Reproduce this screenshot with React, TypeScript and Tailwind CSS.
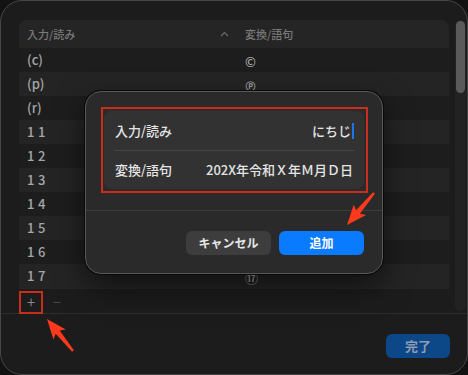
import React from 'react'

// right column is only drawn where it is not covered by the sheet
const ROWS: [string, string, boolean][] = [
  ['(c)', '©', false],
  ['(p)', '℗', false],
  ['(r)', '', false],
  ['11', '', true],
  ['12', '', true],
  ['13', '', true],
  ['14', '', true],
  ['15', '', true],
  ['16', '', true],
  ['17', '⑰', true],
]

// arrow polygon from tail (x1,y1) to tip (x2,y2)
function arrowPoints(x1: number, y1: number, x2: number, y2: number) {
  const dx = x2 - x1
  const dy = y2 - y1
  const len = Math.hypot(dx, dy)
  const ux = dx / len
  const uy = dy / len
  const px = -uy
  const py = ux
  const head = 17
  const back = 20
  const hw = 8
  const neck = 2.6
  const tail = 1.2
  const bx = x2 - ux * head
  const by = y2 - uy * head
  const cx = x2 - ux * back
  const cy = y2 - uy * back
  const pts = [
    [x1 + px * tail, y1 + py * tail],
    [bx + px * neck, by + py * neck],
    [cx + px * hw, cy + py * hw],
    [x2, y2],
    [cx - px * hw, cy - py * hw],
    [bx - px * neck, by - py * neck],
    [x1 - px * tail, y1 - py * tail],
  ]
  return pts.map(p => `${p[0].toFixed(1)},${p[1].toFixed(1)}`).join(' ')
}

export default function App() {
  return (
    <div className="relative h-[375px] w-[468px] overflow-hidden bg-[#121212] font-['Noto_Sans_CJK_JP','Noto_Sans',sans-serif]">
      {/* Window */}
      <div className="flex h-full flex-col rounded-[22px] border border-[#474747] bg-[#1c1c1c]">
        <div className="flex pl-[18px] pr-[1px] pt-[19px]">
          <div className="flex w-[430px] flex-col">
            {/* Header */}
            <div className="flex h-[28px] items-center rounded-t-[8px] bg-[#252525] text-[11px] font-medium text-[#7a7a7a]">
              <div className="flex w-[226px] items-center justify-between pl-[8px] pr-[16px]">
                <span>入力/読み</span>
                <svg width="9" height="6" viewBox="0 0 9 6" fill="none">
                  <polyline points="1,5 4.5,1.5 8,5" stroke="#6a6a6a" strokeWidth="1.2" />
                </svg>
              </div>
              <span>変換/語句</span>
            </div>
            {/* Rows */}
            {ROWS.map((r, i) => (
              <div
                key={r[0]}
                className={`flex h-[24px] items-center text-[13px] font-medium text-[#a6a6a6] ${i % 2 === 0 ? 'bg-[#1d1d1d]' : 'bg-[#242424]'}`}
              >
                <span className={`w-[226px] pl-[8px] ${r[2] ? 'tracking-[3.5px]' : ''}`}>{r[0]}</span>
                <span className="translate-y-[2px]">{r[1]}</span>
              </div>
            ))}
            {/* +/- bar */}
            <div className="flex h-[25px] items-center border-t border-[#262626]">
              <span className="flex w-[24px] justify-center text-[16px] font-light text-[#9a9a9a]">+</span>
              <span className="ml-[2px] flex w-[24px] justify-center text-[16px] font-light text-[#505050]">−</span>
            </div>
          </div>
          {/* Scrollbar */}
          <div className="ml-[6px] h-[291px] w-[11px] rounded-full bg-[#222222] p-[1px]">
            <div className="h-[72px] w-full rounded-full bg-[#5a5a5a]" />
          </div>
        </div>
        <div className="flex flex-1 justify-end border-t border-[#2e2e2e] pr-[17px] pt-[20px]">
          <button className="h-[24px] w-[64px] rounded-[6px] bg-[#0c4788] text-[13px] font-semibold text-[#8e9bb0]">
            完了
          </button>
        </div>
      </div>

      {/* Dialog */}
      <div className="absolute left-[85px] top-[91px] flex h-[183px] w-[298px] flex-col rounded-[16px] border border-[#575757] bg-[#2a2a2a] shadow-[0_0_0_1px_#0a0a0a,0_12px_30px_rgba(0,0,0,0.55)]">
        <div className="px-[18px] pt-[19px]">
          <div className="rounded-[8px] bg-[#323232] text-[13px] font-medium text-[#e4e4e4]">
            <div className="flex h-[39px] items-center justify-between pl-[11px] pr-[10px]">
              <span>入力/読み</span>
              <span className="flex items-center">
                にちじ
                <span className="ml-[1px] h-[16px] w-[2px] bg-[#1d74e6]" />
              </span>
            </div>
            <div className="mx-[10px] h-px bg-[#454545]" />
            <div className="flex h-[38px] items-center justify-between pl-[11px] pr-[11px]">
              <span>変換/語句</span>
              <span>202X年令和Ｘ年Ｍ月Ｄ日</span>
            </div>
          </div>
        </div>
        <div className="mt-[21px] h-px bg-[#3c3c3c]" />
        <div className="flex justify-end gap-[8px] pr-[18px] pt-[20px]">
          <button className="h-[24px] w-[85px] rounded-[6px] bg-[#3d3d3d] text-[12px] font-semibold text-[#e6e6e6]">
            キャンセル
          </button>
          <button className="h-[24px] w-[85px] rounded-[6px] bg-[#0a7bff] text-[12px] font-semibold text-white">
            追加
          </button>
        </div>
      </div>

      {/* Annotations */}
      <div className="pointer-events-none absolute left-[101px] top-[107px] h-[86px] w-[267px] border-2 border-[#c92e1c]" />
      <div className="pointer-events-none absolute left-[19px] top-[291px] h-[23px] w-[24px] border-2 border-[#c92e1c]" />
      <svg className="pointer-events-none absolute left-0 top-0" width="468" height="375">
        <polygon points={arrowPoints(73, 351, 47, 319)} fill="#ff3a1c" />
        <polygon points={arrowPoints(374, 193, 347, 225)} fill="#ff3a1c" />
      </svg>
    </div>
  )
}
